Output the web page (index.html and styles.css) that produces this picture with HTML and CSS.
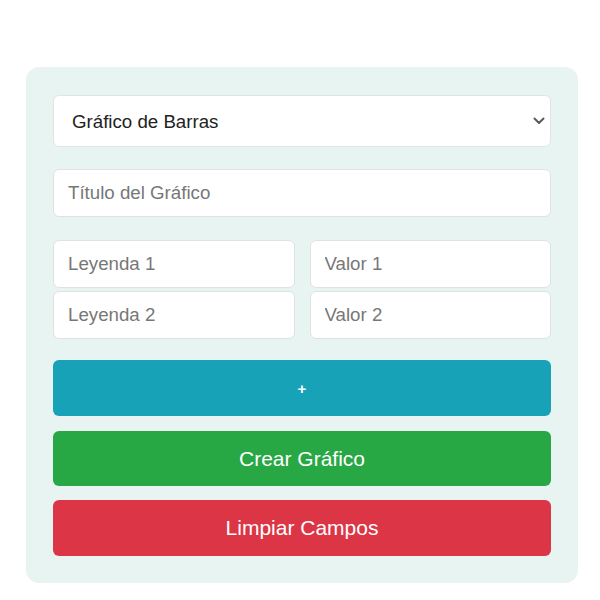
FILE: index.html
```html
<!DOCTYPE html>
<html lang="es">
<head>
<meta charset="utf-8">
<title>Gráfico</title>
<link rel="stylesheet" href="styles.css">
</head>
<body>
<div class="card">
  <div class="select-wrap">
    <select class="select">
      <option>Gráfico de Barras</option>
      <option>Gráfico de Líneas</option>
      <option>Gráfico Circular</option>
    </select>
    <svg class="chevron" width="12" height="8" viewBox="0 0 12 8"><path d="M1.5 1.5 L6 6 L10.5 1.5" fill="none" stroke="#5a5a5a" stroke-width="2" stroke-linecap="round" stroke-linejoin="round"/></svg>
  </div>
  <input class="field title" type="text" placeholder="Título del Gráfico">
  <div class="pairs">
    <input class="field" type="text" placeholder="Leyenda 1">
    <input class="field" type="text" placeholder="Valor 1">
    <input class="field" type="text" placeholder="Leyenda 2">
    <input class="field" type="text" placeholder="Valor 2">
  </div>
  <button class="btn btn-add">+</button>
  <button class="btn btn-create">Crear Gráfico</button>
  <button class="btn btn-clear">Limpiar Campos</button>
</div>
</body>
</html>
```

FILE: styles.css
```css
html, body {
  margin: 0;
  padding: 0;
  background: #ffffff;
}
body {
  padding: 67px 22px 0 26px;
  font-family: "Liberation Sans", Arial, sans-serif;
}
.card {
  width: 552px;
  box-sizing: border-box;
  padding: 28px 27px 27px 27px;
  background: #e8f4f1;
  border-radius: 13px;
  display: flex;
  flex-direction: column;
}
.select-wrap {
  position: relative;
  height: 52px;
}
.select {
  -webkit-appearance: none;
  appearance: none;
  width: 100%;
  height: 52px;
  box-sizing: border-box;
  border: 1px solid #e2e4e3;
  border-radius: 6px;
  background: #ffffff;
  padding: 0 40px 0 18px;
  font-family: "Liberation Sans", Arial, sans-serif;
  font-size: 18.7px;
  color: #222222;
  outline: none;
  margin: 0;
}
.chevron {
  position: absolute;
  right: 6px;
  top: 22px;
}
.field {
  display: block;
  width: 100%;
  height: 48px;
  box-sizing: border-box;
  border: 1px solid #e0e2e1;
  border-radius: 6px;
  background: #ffffff;
  padding: 0 14px;
  font-family: "Liberation Sans", Arial, sans-serif;
  font-size: 18.7px;
  color: #222222;
  outline: none;
  margin: 0;
}
.field::placeholder {
  color: #777777;
}
.title {
  margin-top: 22px;
}
.pairs {
  margin-top: 23px;
  display: grid;
  grid-template-columns: 1fr 1fr;
  column-gap: 15px;
  row-gap: 3px;
}
.btn {
  display: block;
  width: 100%;
  border: none;
  border-radius: 6px;
  color: #ffffff;
  font-family: "Liberation Sans", Arial, sans-serif;
  font-size: 21px;
  margin: 0;
  padding: 0;
  cursor: pointer;
}
.btn-add {
  margin-top: 21px;
  height: 56px;
  background: #17a2b8;
  font-size: 15px;
  font-weight: bold;
}
.btn-create {
  margin-top: 15px;
  height: 55px;
  background: #28a745;
}
.btn-clear {
  margin-top: 14px;
  height: 56px;
  background: #dc3545;
}
```
